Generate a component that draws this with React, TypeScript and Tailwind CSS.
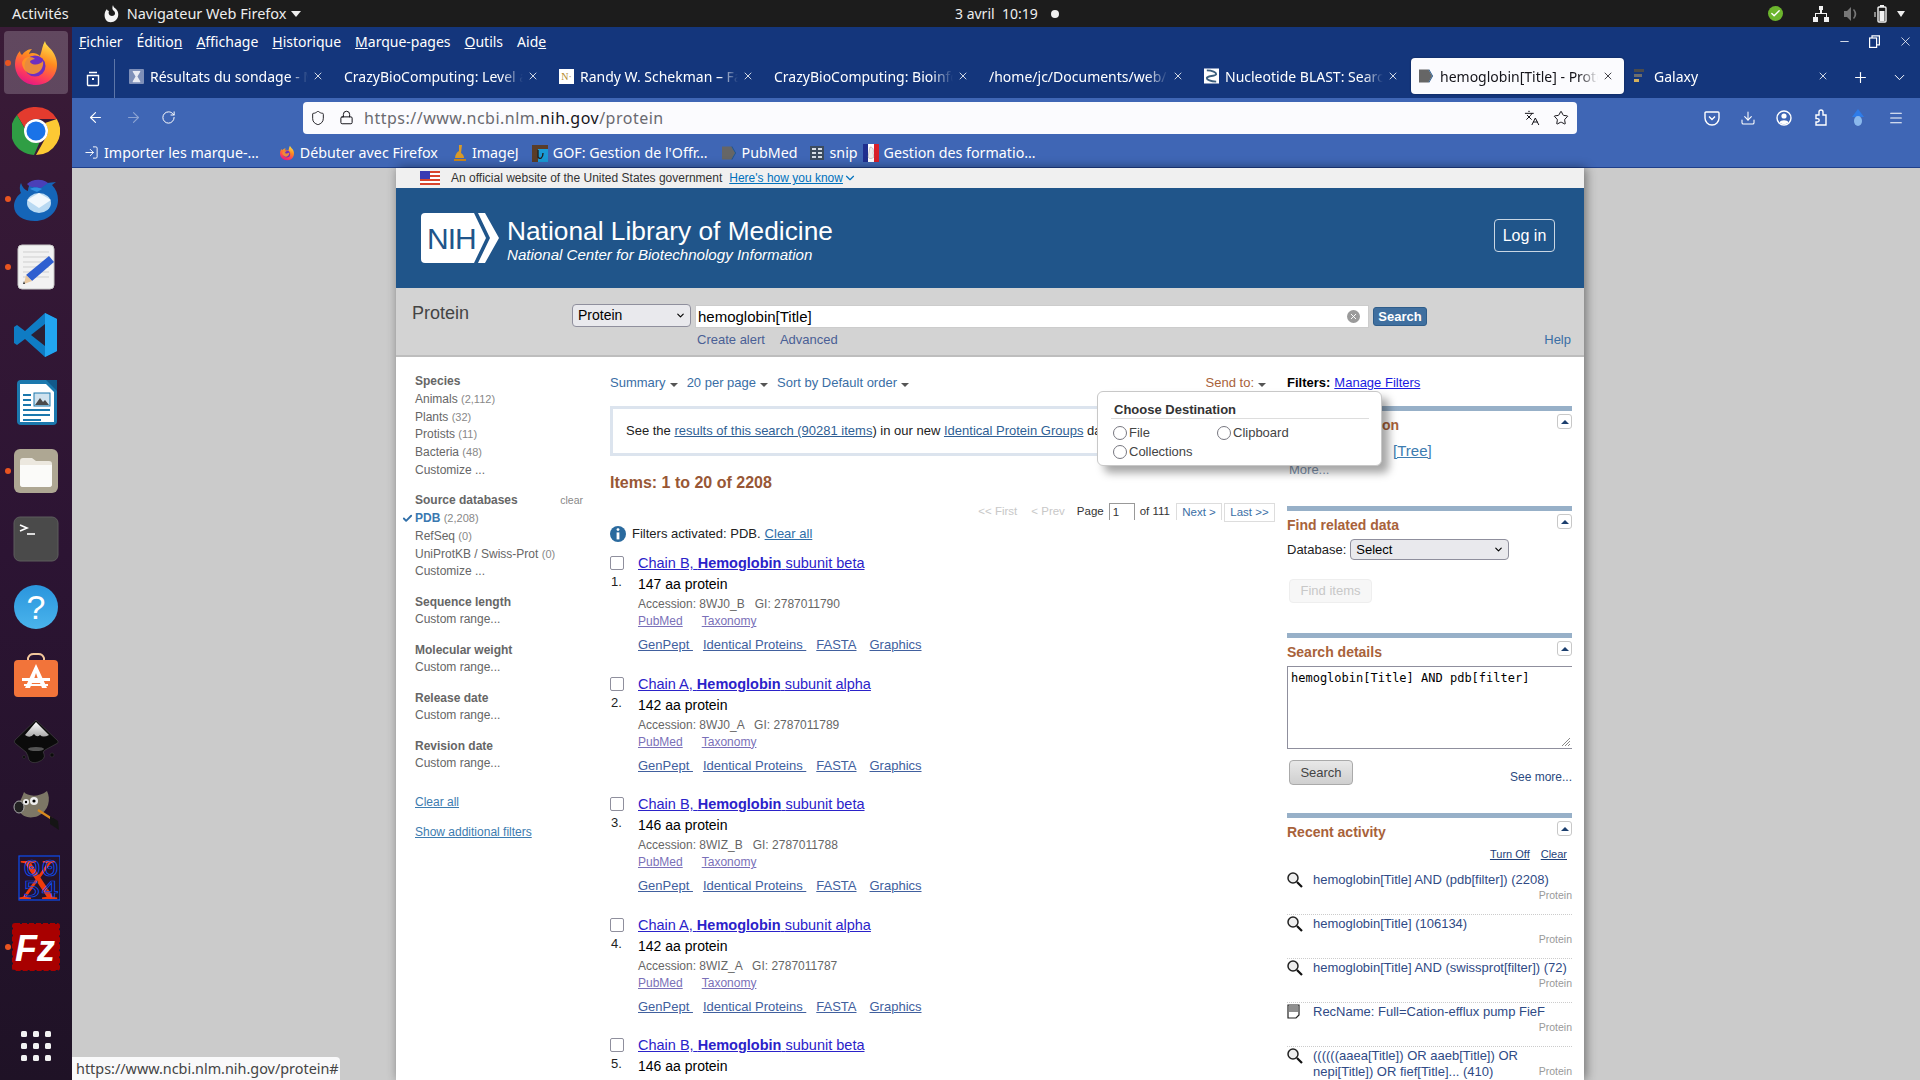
import { ReactNode } from 'react';
import { ArrowLeft, ArrowRight, ChevronDown, Download, Lock, Menu, Plus, RotateCw, Shield, Star, X, Languages, Minus, Check, LogIn } from 'lucide-react';

const Caret = ({ className = 'border-t-[#555]' }: { className?: string }) => (
  <span className={`inline-block w-0 h-0 border-x-[4px] border-x-transparent border-t-[4px] ${className}`} />
);

const FirefoxIcon = ({ size = 48 }: { size?: number }) => (
  <svg width={size} height={size} viewBox="0 0 48 48">
    <defs>
      <linearGradient id="ffa" x1="0.7" y1="0" x2="0.3" y2="1">
        <stop offset="0" stopColor="#ffe14d" />
        <stop offset="0.4" stopColor="#ff8a1f" />
        <stop offset="0.75" stopColor="#ff3d5a" />
        <stop offset="1" stopColor="#e31587" />
      </linearGradient>
    </defs>
    <path d="M33 2c1 5 5 6 8 11 4 6 5 13 3 19-3 9-11 14-20 14C12 46 3 37 3 25c0-5 2-10 5-13 0 2 1 3 2 4 2-3 6-6 10-6-2 2-3 4-3 5 3-2 8-1 11 2 2-5 2-10 5-15z" fill="url(#ffa)" />
    <circle cx="23" cy="27" r="10.5" fill="#6e2fc0" />
    <path d="M12 20c4-3 9-2 11 0-3 1-5 1-5 3 3 4 10 3 13-1 1 5-2 12-9 13-6 1-12-5-12-11 0-1 1-3 2-4z" fill="#ff9a24" opacity="0.85" />
  </svg>
);

const ChromeIcon = () => (
  <svg width="48" height="48" viewBox="0 0 48 48">
    <path d="M24 0a24 24 0 0 1 20.8 12H24a12 12 0 0 0-11.5 8.4L5 8A24 24 0 0 1 24 0z" fill="#e33b2e" />
    <path d="M44.8 12A24 24 0 0 1 24 48l9.5-17A12 12 0 0 0 33 16z" fill="#fcc934" />
    <path d="M5 8l8.7 15a12 12 0 0 0 13.8 12.5L22 48A24 24 0 0 1 5 8z" fill="#2f9e44" />
    <circle cx="24" cy="24" r="12" fill="#fff" />
    <circle cx="24" cy="24" r="9.5" fill="#1a73e8" />
  </svg>
);

const ThunderbirdIcon = () => (
  <svg width="48" height="48" viewBox="0 0 48 48">
    <path d="M9 8c-2 4-1 8 0 10-4 3-7 8-7 13 0 9 9 15 21 15 13 0 23-9 23-21 0-6-2-11-6-15l4-3-9 1C31 5 26 4 22 6c-4 2-6 6-6 10-3-1-6-4-7-8z" fill="#1565b8" />
    <path d="M15 9c5-5 15-6 21-1l-7 5c-5-1-11 0-14-4z" fill="#4a3fb8" />
    <path d="M18 14c3-2 8-2 12 0l-5 3z" fill="#2f8fe0" />
    <ellipse cx="27" cy="28" rx="12" ry="10" fill="#b9d9f2" />
    <path d="M15 25l12 8 12-8-12-7z" fill="#f2f8fd" />
  </svg>
);

const EditorIcon = () => (
  <svg width="48" height="48" viewBox="0 0 48 48">
    <rect x="6" y="2" width="36" height="44" rx="4" fill="#f2f2f2" stroke="#c8c8c8" />
    <path d="M11 9h26M11 14h26M11 19h26M11 24h26M11 29h26M11 34h26" stroke="#cfcfcf" strokeWidth="1" />
    <path d="M37 13l5 6-22 19-6-6z" fill="#2f5fd0" />
    <path d="M14 32l6 6-8 3z" fill="#e8c8a0" />
    <path d="M12 38l1 3-2 0z" fill="#333" />
  </svg>
);

const VsCodeIcon = () => (
  <svg width="48" height="48" viewBox="0 0 48 48">
    <path d="M33 2l12 6v32l-12 6-20-18-8 6-3-2V16l3-2 8 6z" fill="#0f7cc4" />
    <path d="M33 2l12 6v32l-12 6z" fill="#22a5f1" />
    <path d="M33 13v22L19 24z" fill="#2c2034" />
  </svg>
);

const WriterIcon = () => (
  <svg width="48" height="48" viewBox="0 0 48 48">
    <path d="M9 1h26l10 10v31a4 4 0 0 1-4 4H9a4 4 0 0 1-4-4V5a4 4 0 0 1 4-4z" fill="#1b78ad" />
    <path d="M8 5h26l8 8v30H8z" fill="#fff" />
    <path d="M34 1l11 0v11z" fill="#12598a" />
    <path d="M11 15h8v2h-8zM11 20h8v2h-8zM11 25h8v2h-8zM11 30h27v2H11zM11 35h27v2H11zM11 40h18v2H11z" fill="#1b78ad" />
    <rect x="22" y="14" width="16" height="13" fill="#cfe2ee" stroke="#1b78ad" />
    <path d="M23 26l5-7 3 4 2-2 4 5z" fill="#4a4a4a" />
  </svg>
);

const FilesIcon = () => (
  <svg width="48" height="48" viewBox="0 0 48 48">
    <rect x="2" y="2" width="44" height="44" rx="6" fill="#aea793" />
    <path d="M8 14a3 3 0 0 1 3-3h9l4 3h13a3 3 0 0 1 3 3v20a3 3 0 0 1-3 3H11a3 3 0 0 1-3-3z" fill="#ece8df" />
    <path d="M8 18h32v19a3 3 0 0 1-3 3H11a3 3 0 0 1-3-3z" fill="#fbfbf9" />
  </svg>
);

const TerminalIcon = () => (
  <svg width="48" height="48" viewBox="0 0 48 48">
    <rect x="2" y="2" width="44" height="44" rx="6" fill="#4a4a4a" stroke="#5c5c5c" />
    <path d="M8 10l7 3-7 3" fill="none" stroke="#fff" strokeWidth="1.6" />
    <path d="M15 19h8" stroke="#fff" strokeWidth="1.6" />
  </svg>
);

const HelpIcon = () => (
  <svg width="48" height="48" viewBox="0 0 48 48">
    <defs>
      <linearGradient id="hlp" x1="0" y1="0" x2="0" y2="1">
        <stop offset="0" stopColor="#2a95dd" />
        <stop offset="1" stopColor="#4ab4ec" />
      </linearGradient>
    </defs>
    <circle cx="24" cy="24" r="22" fill="url(#hlp)" />
    <text x="24" y="36" textAnchor="middle" fontFamily="Liberation Sans" fontSize="34" fill="#fff">?</text>
  </svg>
);

const StoreIcon = () => (
  <svg width="48" height="48" viewBox="0 0 48 48">
    <path d="M16 10V7a6 6 0 0 1 6-4h4a6 6 0 0 1 6 4v3" fill="none" stroke="#f3c79b" strokeWidth="2" />
    <rect x="2" y="9" width="44" height="37" rx="4" fill="#f2743a" />
    <path d="M24 13l-11 24h5l2-5h8l2 5h5zM22 28l2-6 2 6z" fill="#fff" />
    <path d="M10 27h28v3H10zM12 33h24v2H12z" fill="#fff" />
  </svg>
);

const InkscapeIcon = () => (
  <svg width="48" height="48" viewBox="0 0 48 48">
    <defs>
      <linearGradient id="ink" x1="0" y1="0" x2="0" y2="1">
        <stop offset="0" stopColor="#ffffff" />
        <stop offset="1" stopColor="#a8a8a8" />
      </linearGradient>
    </defs>
    <path d="M24 1L46 22q1 2-2 3L33 31q-3 2-1 4 2 5-6 8-6 2-9-2-1-5-3-8L4 25q-3-2-1-4z" fill="#0b0b0b" stroke="#4a4a4a" strokeWidth="0.6" />
    <path d="M24 3L37 16q-6 3-9 0-3 3-6-1-4 5-9 1z" fill="url(#ink)" />
    <ellipse cx="24" cy="30" rx="8" ry="2" fill="#555" />
    <circle cx="40" cy="36" r="2" fill="#0b0b0b" stroke="#444" strokeWidth="0.4" />
    <circle cx="12" cy="38" r="1.5" fill="#0b0b0b" stroke="#444" strokeWidth="0.4" />
  </svg>
);

const GimpIcon = () => (
  <svg width="48" height="48" viewBox="0 0 48 48">
    <path d="M12 5c3 4 14 6 23-1 4 8 2 20-9 25-8 3-15 1-18-4-2-2-3-5-3-6 2-3 5-8 7-14z" fill="#7d7766" />
    <ellipse cx="7" cy="20" rx="5" ry="6" fill="#222" stroke="#aaa" />
    <circle cx="14" cy="15" r="3" fill="#eee" />
    <circle cx="22" cy="14" r="4" fill="#eee" />
    <circle cx="14" cy="15" r="1.2" fill="#000" />
    <circle cx="22" cy="14" r="1.6" fill="#000" />
    <path d="M26 23l14 9" stroke="#d98a1f" strokeWidth="2.4" />
    <path d="M38 29l8 5 1 9-9-6z" fill="#151515" />
  </svg>
);

const XrayIcon = () => (
  <svg width="48" height="48" viewBox="0 0 48 48">
    <text x="26" y="44" textAnchor="middle" fontFamily="Liberation Serif" fontSize="56" fill="#f03a0a">X</text>
    <rect x="7" y="1" width="41" height="44" fill="none" stroke="#0c4cf0" strokeWidth="1.2" />
    <text x="11" y="21" fontFamily="DejaVu Sans Mono" fontSize="22" textLength="36" lengthAdjust="spacingAndGlyphs" fill="none" stroke="#0c4cf0" strokeWidth="0.7">00</text>
    <text x="11" y="42" fontFamily="DejaVu Sans Mono" fontSize="22" textLength="36" lengthAdjust="spacingAndGlyphs" fill="none" stroke="#0c4cf0" strokeWidth="0.7">54</text>
  </svg>
);

const FileZillaIcon = () => (
  <svg width="48" height="48" viewBox="0 0 48 48">
    <rect x="1" y="1" width="46" height="46" rx="2" fill="#a80000" stroke="#a80000" strokeWidth="2" strokeDasharray="5 2" />
    <text x="23" y="38" textAnchor="middle" fontFamily="Liberation Sans" fontSize="36" fontWeight="700" fontStyle="italic" fill="#fff">Fz</text>
  </svg>
);

const dockApps = [
  { icon: <FirefoxIcon />, running: true, active: true },
  { icon: <ChromeIcon />, running: false, active: false },
  { icon: <ThunderbirdIcon />, running: true, active: false },
  { icon: <EditorIcon />, running: true, active: false },
  { icon: <VsCodeIcon />, running: false, active: false },
  { icon: <WriterIcon />, running: false, active: false },
  { icon: <FilesIcon />, running: true, active: false },
  { icon: <TerminalIcon />, running: false, active: false },
  { icon: <HelpIcon />, running: false, active: false },
  { icon: <StoreIcon />, running: false, active: false },
  { icon: <InkscapeIcon />, running: false, active: false },
  { icon: <GimpIcon />, running: false, active: false },
  { icon: <XrayIcon />, running: false, active: false },
  { icon: <FileZillaIcon />, running: true, active: false },
];

const Dock = () => (
  <div className="w-[72px] h-full shrink-0 flex flex-col items-center pt-[2px] pb-[19px] bg-gradient-to-b from-[#3a1b37] via-[#2c1433] to-[#1f1226]">
    {dockApps.map((app, i) => (
      <div key={i} className="relative w-[72px] h-[68px] shrink-0 flex items-center justify-center">
        {app.active && <div className="absolute left-[4px] top-[2px] w-[64px] h-[63px] rounded-[4px] bg-white/20" />}
        {app.running && <div className="absolute left-[5px] top-[31px] w-[6px] h-[6px] rounded-full bg-[#e95420]" />}
        <div className="relative">{app.icon}</div>
      </div>
    ))}
    <div className="mt-auto grid grid-cols-3 gap-[6px]">
      {Array.from({ length: 9 }).map((_, i) => (
        <div key={i} className="w-[6px] h-[6px] rounded-[1.5px] bg-[#f2f2f2]" />
      ))}
    </div>
  </div>
);

const TopBar = () => (
  <div className="relative h-[27px] shrink-0 bg-[#1c1c1c] text-[#ededed] text-[14.5px] flex items-center pl-[12px] pr-[15px] font-['Noto_Sans',sans-serif]">
    <span>Activités</span>
    <svg className="ml-[35px]" width="16" height="18" viewBox="0 0 16 18">
      <path d="M9 0c0 2 2 3 3 4 3 3 3 8 0 11s-8 3-10 0C0 12 0 7 3 4c0 1 1 2 2 2-1 2 0 5 3 5s4-3 2-5C8 5 8 2 9 0z" fill="#f4f4f4" />
    </svg>
    <span className="ml-[7px]">Navigateur Web Firefox</span>
    <span className="ml-[5px] w-0 h-0 border-x-[5px] border-x-transparent border-t-[6px] border-t-[#ededed]" />
    <div className="absolute left-[955px] flex items-center text-[14px]">
      <span>3 avril&nbsp; 10:19</span>
      <span className="ml-[13px] w-[8px] h-[8px] rounded-full bg-[#f0f0f0]" />
    </div>
    <div className="ml-auto flex items-center">
      <span className="w-[15px] h-[15px] rounded-full bg-[#6cb52d] flex items-center justify-center">
        <Check size={11} strokeWidth={3} className="text-white" />
      </span>
      <svg className="ml-[30px]" width="16" height="16" viewBox="0 0 16 16" fill="#f2f2f2">
        <path d="M6 0h4v4H9v3h5v4h2v5h-5v-5h2V8H3v3h2v5H0v-5h2V7h5V4H6z" />
      </svg>
      <svg className="ml-[14px]" width="16" height="16" viewBox="0 0 16 16" fill="#777">
        <path d="M1 5h3l4-4v14l-4-4H1z" />
        <path d="M10 4l1-1c3 3 3 7 0 10l-1-1c2-2 2-6 0-8z" />
      </svg>
      <svg className="ml-[13px]" width="16" height="18" viewBox="0 0 16 18">
        <path d="M2 7h2v5H2z" fill="#888" />
        <rect x="6" y="2" width="8" height="15" rx="1" fill="none" stroke="#f2f2f2" strokeWidth="1.4" />
        <rect x="8" y="0" width="4" height="2" fill="#f2f2f2" />
        <rect x="7.5" y="6" width="5" height="10" fill="#f2f2f2" />
      </svg>
      <span className="ml-[9px] w-0 h-0 border-x-[4px] border-x-transparent border-t-[6px] border-t-[#ededed]" />
    </div>
  </div>
);

const Favicon = ({ kind }: { kind: string }) => {
  if (kind === 'hourglass') {
    return (
      <svg width="15" height="15" viewBox="0 0 16 16">
        <rect width="16" height="16" rx="1" fill="#7e8fb8" />
        <path d="M4 2h8v1L9 8l3 5v1H4v-1l3-5-3-5z" fill="#e8eaf2" />
      </svg>
    );
  }
  if (kind === 'randy') {
    return (
      <span className="w-[15px] h-[15px] bg-white text-[#b48a2b] text-[10px] leading-[15px] font-['Liberation_Serif',serif] text-center">N·</span>
    );
  }
  if (kind === 'blast') {
    return (
      <svg width="15" height="16" viewBox="0 0 16 16">
        <rect width="16" height="16" fill="#fff" />
        <path d="M3 2c6 0 10 2 10 4S3 8 3 10s4 4 10 4" fill="none" stroke="#3c5f7e" strokeWidth="2" />
      </svg>
    );
  }
  if (kind === 'pubmed') {
    return (
      <svg width="15" height="16" viewBox="0 0 16 16">
        <path d="M0 1h10l4 7-4 7H0z" fill="#666" />
        <path d="M11 1l4 7-4 7h-1l4-7-4-7z" fill="#20558a" />
      </svg>
    );
  }
  return (
    <svg width="14" height="14" viewBox="0 0 14 14">
      <path d="M0 0h10v3H0z" fill="#4b4b4b" />
      <path d="M0 5h8v3H0z" fill="#6d6d6d" />
      <path d="M0 10h5v3H0z" fill="#d5b05c" />
    </svg>
  );
};

const tabs = [
  { title: 'Résultats du sondage - Mentimeter', icon: 'hourglass' },
  { title: 'CrazyBioComputing: Level and more', icon: '' },
  { title: 'Randy W. Schekman – Facts', icon: 'randy' },
  { title: 'CrazyBioComputing: Bioinformatics', icon: '' },
  { title: '/home/jc/Documents/web/index', icon: '' },
  { title: 'Nucleotide BLAST: Search nucleotide', icon: 'blast' },
  { title: 'hemoglobin[Title] - Protein', icon: 'pubmed', active: true },
  { title: 'Galaxy', icon: 'galaxy' },
];

const TabBar = () => (
  <div className="h-[39px] flex items-start">
    <div className="w-[43px] h-[39px] border-r border-r-[#5d76a8] flex items-center justify-center">
      <svg width="16" height="16" viewBox="0 0 16 16" fill="none" stroke="#fff" strokeWidth="1.4">
        <path d="M4 1.5h8M2.5 4.5h11v9a1 1 0 0 1-1 1h-9a1 1 0 0 1-1-1z" />
        <path d="M7 8h2" strokeWidth="2" />
      </svg>
    </div>
    <div className="ml-[6px] flex">
      {tabs.map((tab) => (
        <div
          key={tab.title}
          className={`w-[213px] mr-[2px] h-[36px] mt-[-1px] rounded-[4px] pl-[8px] pr-[10px] flex items-center text-[14px] ${
            tab.active ? 'bg-[#fbfbfe] text-[#15141a] shadow-[0_0_2px_rgba(0,0,0,0.4)]' : 'text-white'
          }`}
        >
          {tab.icon && (
            <span className="mr-[6px] shrink-0 flex">
              <Favicon kind={tab.icon} />
            </span>
          )}
          <span className="flex-1 overflow-hidden whitespace-nowrap [mask-image:linear-gradient(to_right,black_88%,transparent)]">{tab.title}</span>
          <X size={12} strokeWidth={1.6} className="ml-[4px] shrink-0" />
        </div>
      ))}
    </div>
    <div className="h-[36px] flex items-center text-white">
      <Plus size={17} strokeWidth={1.6} className="ml-[11px]" />
      <ChevronDown size={17} strokeWidth={1.4} className="ml-[22px]" />
    </div>
  </div>
);

const BookmarkIcon = ({ kind }: { kind: string }) => {
  if (kind === 'ff') return <FirefoxIcon size={16} />;
  if (kind === 'imagej') {
    return (
      <svg width="14" height="18" viewBox="0 0 14 18">
        <path d="M6 1h3l-1 8c2 1 3 3 3 5H2c0-3 2-6 4-7z" fill="#d89a28" />
        <path d="M1 15h12v2H1z" fill="#c9851a" />
      </svg>
    );
  }
  if (kind === 'gof') {
    return (
      <svg width="16" height="17" viewBox="0 0 16 17">
        <rect width="16" height="17" fill="#5a3d28" />
        <rect x="6" y="4" width="10" height="13" fill="#1a9ad6" />
        <path d="M6 5v7c2 3 5 1 5-4" fill="none" stroke="#222" strokeWidth="1.4" />
      </svg>
    );
  }
  if (kind === 'pubmed') return <Favicon kind="pubmed" />;
  if (kind === 'snip') {
    return (
      <svg width="16" height="16" viewBox="0 0 16 16">
        <rect x="1" y="1" width="14" height="14" fill="#3c4b5e" />
        <path d="M3 3h4v2H3zM3 7h4v2H3zM3 11h4v2H3zM9 3h4v2H9zM9 7h4v2H9zM9 11h4v2H9z" fill="#d5dce5" />
      </svg>
    );
  }
  return (
    <svg width="16" height="18" viewBox="0 0 16 18">
      <rect width="16" height="18" fill="#fff" />
      <rect width="5" height="18" fill="#1f2f8f" />
      <rect x="11" width="5" height="18" fill="#d8202a" />
      <path d="M7 3c3 0 4 3 3 6l1 4c-2 2-5 2-6 0l1-5z" fill="#eee" stroke="#888" strokeWidth="0.4" />
    </svg>
  );
};

const bookmarks = [
  { label: 'Débuter avec Firefox', kind: 'ff', gap: 'ml-[20px]' },
  { label: 'ImageJ', kind: 'imagej', gap: 'ml-[15px]' },
  { label: "GOF: Gestion de l'Offr…", kind: 'gof', gap: 'ml-[13px]' },
  { label: 'PubMed', kind: 'pubmed', gap: 'ml-[14px]' },
  { label: 'snip', kind: 'snip', gap: 'ml-[11px]' },
  { label: 'Gestion des formatio…', kind: 'fr', gap: 'ml-[5px]' },
];

const BrowserChrome = () => (
  <div className="shrink-0 font-['Noto_Sans',sans-serif]">
    <div className="bg-[#14367c]">
      <div className="relative h-[32px] pb-[4px] flex items-center pl-[7px] text-white text-[14px] gap-[14px]">
        <span><span className="underline">F</span>ichier</span>
        <span>Éditio<span className="underline">n</span></span>
        <span><span className="underline">A</span>ffichage</span>
        <span><span className="underline">H</span>istorique</span>
        <span><span className="underline">M</span>arque-pages</span>
        <span><span className="underline">O</span>utils</span>
        <span>Aid<span className="underline">e</span></span>
        <div className="ml-auto mr-[7px] flex items-center gap-[18px]">
          <Minus size={13} strokeWidth={1.5} />
          <svg width="11" height="13" viewBox="0 0 11 13" fill="none" stroke="#fff" strokeWidth="1.2">
            <rect x="0.6" y="3" width="7" height="9.4" />
            <path d="M3 3V0.8h7.4v9H7.6" />
          </svg>
          <X size={15} strokeWidth={1.2} />
        </div>
      </div>
      <TabBar />
    </div>
    <div className="bg-[#3f66b5] border-b border-b-[#1f3f8a]">
      <div className="h-[39px] flex items-center text-white">
        <ArrowLeft size={17} strokeWidth={1.6} className="ml-[15px]" />
        <ArrowRight size={17} strokeWidth={1.6} className="ml-[21px] opacity-40" />
        <RotateCw size={15} strokeWidth={1.6} className="ml-[19px]" />
        <div className="ml-[127px] w-[1274px] h-[32px] bg-[#fbfbfe] rounded-[4px] flex items-center text-[#15141a]">
          <Shield size={16} strokeWidth={1.4} className="ml-[7px]" />
          <Lock size={15} strokeWidth={1.6} className="ml-[13px]" />
          <span className="ml-[10px] mt-px text-[16px] tracking-[0.5px] text-[#6a6a70] whitespace-nowrap">https://www.ncbi.nlm.<span className="text-[#15141a]">nih.gov</span>/protein</span>
          <Languages size={16} strokeWidth={1.5} className="ml-auto" />
          <Star size={16} strokeWidth={1.5} className="ml-[13px] mr-[8px]" />
        </div>
        <svg className="ml-[127px]" width="16" height="16" viewBox="0 0 16 16" fill="none" stroke="#fff" strokeWidth="1.4">
          <path d="M2 2h12a1 1 0 0 1 1 1v5a7 7 0 0 1-14 0V3a1 1 0 0 1 1-1z" />
          <path d="M5 6.5l3 3 3-3" />
        </svg>
        <Download size={16} strokeWidth={1.6} className="ml-[20px]" />
        <svg className="ml-[20px]" width="16" height="16" viewBox="0 0 16 16">
          <circle cx="8" cy="8" r="7" fill="none" stroke="#fff" strokeWidth="1.4" />
          <circle cx="8" cy="6" r="2.6" fill="#fff" />
          <path d="M3.5 12.5c1-3 8-3 9 0-2 2-7 2-9 0z" fill="#fff" />
        </svg>
        <svg className="ml-[21px]" width="16" height="17" viewBox="0 0 16 17" fill="none" stroke="#fff" strokeWidth="1.4">
          <path d="M3 6h3V3a2 2 0 0 1 4 0v3h3v10H3v-3h1.5a1.5 1.5 0 0 0 0-3.4H3z" />
        </svg>
        <svg className="ml-[21px]" width="16" height="18" viewBox="0 0 16 18">
          <path d="M8 0l6 8H2z" fill="#2e7be8" />
          <ellipse cx="8" cy="12" rx="4" ry="5" fill="#8ab8ec" />
        </svg>
        <Menu size={16} strokeWidth={1.6} className="ml-[22px]" />
      </div>
      <div className="h-[30px] flex items-start pt-[4px] text-white text-[14.25px]">
        <LogIn size={15} strokeWidth={1.5} className="ml-[12px] mt-[4px]" />
        <span className="ml-[5px] mt-px">Importer les marque-…</span>
        {bookmarks.map((b) => (
          <div key={b.label} className={`${b.gap} flex items-center gap-[5px] h-[24px]`}>
            <BookmarkIcon kind={b.kind} />
            <span>{b.label}</span>
          </div>
        ))}
      </div>
    </div>
  </div>
);

const NihLogo = () => (
  <svg width="78" height="50" viewBox="0 0 78 50">
    <path d="M4 0h49l12 25-12 25H4a4 4 0 0 1-4-4V4a4 4 0 0 1 4-4z" fill="#fff" />
    <path d="M57 0h7l14 25-14 25h-7l12-25z" fill="#fff" />
    <text x="6" y="36" fontFamily="Liberation Sans" fontSize="30" fill="#20558a" letterSpacing="-1">NIH</text>
  </svg>
);

const GovBanner = () => (
  <div className="h-[20px] bg-[#f0f0f0] flex items-center pl-[24px] text-[12px] text-[#333]">
    <svg width="20" height="14" viewBox="0 0 20 14">
      <rect width="20" height="14" fill="#fff" />
      <path d="M0 1h20M0 5h20M0 9h20M0 13h20" stroke="#d8442c" strokeWidth="2" />
      <rect width="10" height="8" fill="#3b3bb3" />
    </svg>
    <span className="ml-[11px]">An official website of the United States government</span>
    <span className="ml-[7px] text-[#0071bc] underline">Here's how you know</span>
    <ChevronDown size={14} className="text-[#0071bc]" />
  </div>
);

const PageHeader = () => (
  <div className="h-[100px] bg-[#20558a] flex items-center pl-[25px] pr-[29px] text-white">
    <NihLogo />
    <div className="ml-[8px] mt-[3px]">
      <div className="text-[26.3px] leading-[30px]">National Library of Medicine</div>
      <div className="text-[15.1px] leading-[18px] italic">National Center for Biotechnology Information</div>
    </div>
    <div className="ml-auto w-[61px] h-[33px] mt-[-5px] border border-[#c9d6e3] rounded-[4px] flex items-center justify-center text-[16px]">Log in</div>
  </div>
);

const FakeSelect = ({ label, className }: { label: string; className: string }) => (
  <div className={`flex items-center justify-between bg-[#e9e9ed] border border-[#8f8f9d] rounded-[4px] pl-[5px] pr-[4px] text-black ${className}`}>
    <span>{label}</span>
    <ChevronDown size={11} strokeWidth={2.5} />
  </div>
);

const SearchBar = () => (
  <div className="h-[69px] bg-[#d3d3d3] border-b-2 border-b-[#bdbdbd] pl-[16px] pr-[13px] pt-[15px] flex">
    <div className="w-[160px] text-[18px] leading-[20px] text-[#444]">Protein</div>
    <div className="flex-1">
      <div className="flex items-start">
        <FakeSelect label="Protein" className="w-[119px] h-[23px] mt-px text-[14px]" />
        <div className="relative ml-[4px] w-[674px] h-[23px] mt-[2px]">
          <input readOnly value="hemoglobin[Title]" className="w-full h-full bg-white border border-[#ccc] pl-[2px] text-[15px] text-black outline-none" />
          <span className="absolute right-[9px] top-[5px] w-[13px] h-[13px] rounded-full bg-[#9a9a9a] flex items-center justify-center">
            <X size={9} strokeWidth={2.5} className="text-white" />
          </span>
        </div>
        <div className="ml-[4px] w-[54px] h-[19px] mt-[4px] rounded-[3px] bg-[#3f6f9f] border border-[#2f5d8a] text-white text-[13px] font-bold flex items-center justify-center">Search</div>
      </div>
      <div className="mt-[3px] h-[18px] pl-[125px] flex items-center text-[13px] text-[#4a5f95]">
        <span>Create alert</span>
        <span className="ml-[15px]">Advanced</span>
        <span className="ml-auto text-[#3a6ea5]">Help</span>
      </div>
    </div>
  </div>
);

const Facet = ({ title, items, clear }: { title: string; items: ReactNode[]; clear?: boolean }) => (
  <div className="mb-[12.4px] text-[12px] leading-[17.8px] text-[#666]">
    <div className="flex items-center justify-between pr-[27px]">
      <span className="font-bold">{title}</span>
      {clear && <span className="text-[10.5px] text-[#888]">clear</span>}
    </div>
    {items.map((item, i) => (
      <div key={i}>{item}</div>
    ))}
  </div>
);

const Count = ({ n }: { n: string }) => <span className="text-[#888] text-[11px]"> ({n})</span>;

const Sidebar = () => (
  <div className="w-[214px] shrink-0 pl-[19px] pt-[16px]">
    <Facet
      title="Species"
      items={[
        <>Animals <Count n="2,112" /></>,
        <>Plants <Count n="32" /></>,
        <>Protists <Count n="11" /></>,
        <>Bacteria <Count n="48" /></>,
        'Customize ...',
      ]}
    />
    <Facet
      title="Source databases"
      clear
      items={[
        <span className="relative">
          <Check size={11} strokeWidth={4} className="absolute -left-[13px] top-[2px] text-[#2f6ea8]" />
          <b className="text-[#3a78b0]">PDB</b> <Count n="2,208" />
        </span>,
        <>RefSeq <Count n="0" /></>,
        <>UniProtKB / Swiss-Prot <Count n="0" /></>,
        'Customize ...',
      ]}
    />
    <Facet title="Sequence length" items={['Custom range...']} />
    <Facet title="Molecular weight" items={['Custom range...']} />
    <Facet title="Release date" items={['Custom range...']} />
    <Facet title="Revision date" items={['Custom range...']} />
    <div className="mt-[20px] text-[12px] leading-[18px] text-[#3d7cb0] underline">Clear all</div>
    <div className="mt-[12px] text-[12px] leading-[18px] text-[#3d7cb0] underline">Show additional filters</div>
  </div>
);

const results = [
  { chain: 'Chain B,', tail: 'subunit beta', aa: '147', acc: '8WJ0_B', gi: '2787011790' },
  { chain: 'Chain A,', tail: 'subunit alpha', aa: '142', acc: '8WJ0_A', gi: '2787011789' },
  { chain: 'Chain B,', tail: 'subunit beta', aa: '146', acc: '8WIZ_B', gi: '2787011788' },
  { chain: 'Chain A,', tail: 'subunit alpha', aa: '142', acc: '8WIZ_A', gi: '2787011787' },
  { chain: 'Chain B,', tail: 'subunit beta', aa: '146', acc: '8WIZ_B', gi: '2787011786' },
];

const ResultItem = ({ index, item }: { index: number; item: (typeof results)[number] }) => (
  <div className="flex mb-[20.5px]">
    <div className="w-[28px] shrink-0 pt-[2px]">
      <input type="checkbox" className="appearance-none block w-[14px] h-[14px] border border-[#8f8f9d] rounded-[2px] bg-white" />
      <div className="mt-[3px] pl-px text-[13px] leading-[18px] text-[#222]">{index}.</div>
    </div>
    <div>
      <div className="h-[18px] leading-[18px] text-[14.5px] text-[#2b22c9] underline whitespace-pre">
        {item.chain} <b>Hemoglobin</b> {item.tail}
      </div>
      <div className="mt-[3px] h-[18px] leading-[18px] text-[14px] text-black">{item.aa} aa protein</div>
      <div className="mt-[2px] h-[18px] leading-[18px] text-[12px] text-[#666] whitespace-pre">Accession: {item.acc}   GI: {item.gi}</div>
      <div className="-mt-px h-[18px] leading-[18px] text-[12px] text-[#7a70b8] flex gap-[19px]">
        <span className="underline">PubMed</span>
        <span className="underline">Taxonomy</span>
      </div>
      <div className="mt-[6px] h-[18px] leading-[18px] text-[13px] text-[#41609e] flex gap-[10px] whitespace-pre">
        <span className="underline">GenPept </span>
        <span className="underline">Identical Proteins </span>
        <span className="underline">FASTA</span>
        <span className="underline ml-[3px]">Graphics</span>
      </div>
    </div>
  </div>
);

const Radio = () => (
  <input type="radio" className="appearance-none block ml-[2px] w-[14px] h-[14px] rounded-full border border-[#77777f] bg-white" />
);

const SendToPopup = () => (
  <div className="absolute left-[487px] top-[34px] z-10 w-[285px] h-[75px] bg-white border border-[#c8c8c8] rounded-[6px] shadow-[7px_7px_8px_rgba(0,0,0,0.35)] pl-[13px] pr-[12px] pt-[8px] text-[13px] leading-[19px] text-[#444]">
    <div className="border-b border-b-[#ddd] h-[19px] pl-[3px] font-bold text-[#333]">Choose Destination</div>
    <div className="mt-[4px] flex items-center">
      <Radio />
      <span className="ml-[2px] w-[86px]">File</span>
      <Radio />
      <span className="ml-[2px]">Clipboard</span>
    </div>
    <div className="flex items-center">
      <Radio />
      <span className="ml-[2px]">Collections</span>
    </div>
  </div>
);

const Pager = () => (
  <div className="mt-[10px] h-[19px] flex items-start justify-end text-[11.5px] leading-[17px] text-[#333]">
    <span className="text-[#c8c8c8]">&lt;&lt; First</span>
    <span className="ml-[14px] text-[#c8c8c8]">&lt; Prev</span>
    <span className="ml-[12px]">Page</span>
    <div className="ml-[5px] w-[26px] h-[17px] border-x border-t border-[#999] pl-[3px]">1</div>
    <span className="ml-[5px]">of 111</span>
    <div className="ml-[6px] w-[46px] h-[17px] border-x border-t border-[#ddd] text-center text-[#3a6ea5]">Next &gt;</div>
    <div className="ml-[2px] w-[51px] h-[19px] border-x border-y border-[#ddd] text-center text-[#3a6ea5]">Last &gt;&gt;</div>
  </div>
);

const MainColumn = () => (
  <div className="relative w-[665px] shrink-0 pt-[17px]">
    <div className="h-[18px] flex items-center text-[13px] text-[#3a6ea5] pr-[9px]">
      <span>Summary</span>
      <span className="ml-[4px]"><Caret /></span>
      <span className="ml-[9px]">20 per page</span>
      <span className="ml-[4px]"><Caret /></span>
      <span className="ml-[9px]">Sort by Default order</span>
      <span className="ml-[4px]"><Caret /></span>
      <span className="ml-auto text-[#a8623a]">Send to:</span>
      <span className="ml-[4px]"><Caret /></span>
    </div>
    <SendToPopup />
    <div className="mt-[14px] h-[50px] border-[3px] border-[#dce4ee] pl-[13px] flex items-center text-[13px] text-[#222] whitespace-nowrap overflow-hidden">
      <span>See the <span className="text-[#2f5f95] underline">results of this search (90281 items</span>) in our new <span className="text-[#2f5f95] underline">Identical Protein Groups</span> database.</span>
    </div>
    <div className="mt-[17px] h-[20px] leading-[20px] text-[16px] font-bold text-[#985735]">Items: 1 to 20 of 2208</div>
    <Pager />
    <div className="mt-[3px] h-[18px] flex items-center text-[13px] text-[#222]">
      <svg width="16" height="16" viewBox="0 0 16 16">
        <circle cx="8" cy="8" r="8" fill="#2a6a9e" />
        <circle cx="8" cy="3.6" r="1.4" fill="#fff" />
        <path d="M6.6 6.4h2.8v7H6.6z" fill="#fff" />
      </svg>
      <span className="ml-[6px]">Filters activated: PDB.</span>
      <span className="ml-[4px] text-[#2f6ea8] underline">Clear all</span>
    </div>
    <div className="mt-[11px]">
      {results.map((item, i) => (
        <ResultItem key={i} index={i + 1} item={item} />
      ))}
    </div>
  </div>
);

const SectionHead = ({ title }: { title: string }) => (
  <>
    <div className="h-[5px] bg-[#97b0c8]" />
    <div className="mt-[5px] h-[18px] flex items-start justify-between">
      <span className="text-[14px] leading-[18px] font-bold text-[#a8623a]">{title}</span>
      <span className="-mt-[2px] w-[15px] h-[15px] border border-[#c8c8c8] rounded-[3px] flex items-center justify-center bg-white">
        <span className="w-0 h-0 border-x-[4px] border-x-transparent border-b-[4px] border-b-[#1c3f6e]" />
      </span>
    </div>
  </>
);

const MagnifierIcon = () => (
  <svg width="16" height="16" viewBox="0 0 16 16" fill="none">
    <circle cx="6" cy="6" r="5" stroke="#222" strokeWidth="1.5" fill="#eee" />
    <path d="M10 10l5 5" stroke="#111" strokeWidth="2.2" />
  </svg>
);

const RecordIcon = () => (
  <svg width="13" height="15" viewBox="0 0 13 15" fill="none">
    <path d="M1 1h11v10l-3 3H1z" stroke="#222" strokeWidth="1.2" fill="#fff" />
    <path d="M2 3h9M2 5h9M2 7h9" stroke="#222" strokeWidth="1.2" />
  </svg>
);

const activity: { text: ReactNode; icon: ReactNode }[] = [
  { text: 'hemoglobin[Title] AND (pdb[filter]) (2208)', icon: <MagnifierIcon /> },
  { text: 'hemoglobin[Title] (106134)', icon: <MagnifierIcon /> },
  { text: 'hemoglobin[Title] AND (swissprot[filter]) (72)', icon: <MagnifierIcon /> },
  { text: 'RecName: Full=Cation-efflux pump FieF', icon: <RecordIcon /> },
  { text: <>((((((aaea[Title]) OR aaeb[Title]) OR<br />nepi[Title]) OR fief[Title]... (410)</>, icon: <MagnifierIcon /> },
];

const RightColumn = () => (
  <div className="w-[285px] ml-[12px] shrink-0 pt-[17px]">
    <div className="h-[18px] flex items-center text-[13px]">
      <b className="text-black">Filters:</b>
      <span className="ml-[4px] text-[#1a1ae0] underline">Manage Filters</span>
    </div>
    <div className="mt-[14px] h-[100px]">
      <SectionHead title="Results by taxon" />
      <div className="mt-[8px] h-[18px] leading-[18px] text-[14px] text-[#444]">
        Top Organisms <span className="ml-[8px] text-[15px] text-[#3d7cb0] underline">[Tree]</span>
      </div>
      <div className="mt-px h-[18px] pl-[2px] leading-[18px] text-[13px] text-[#7f93ad]">More...</div>
    </div>
    <div className="h-[127px]">
      <SectionHead title="Find related data" />
      <div className="mt-[5px] flex items-center text-[13px] text-[#222]">
        <span>Database:</span>
        <FakeSelect label="Select" className="ml-[4px] w-[159px] h-[21px] text-[13px]" />
      </div>
      <div className="mt-[19px] ml-[2px] w-[83px] h-[24px] rounded-[4px] border border-[#eee] bg-[#f7f7f7] text-[13px] text-[#c8c8c8] flex items-center justify-center">Find items</div>
    </div>
    <div className="h-[180px]">
      <SectionHead title="Search details" />
      <div className="relative mt-[5px] h-[83px] border border-[#8f8f9d] border-r-0 pl-[3px] pt-[3px] font-['DejaVu_Sans_Mono',monospace] text-[12px] leading-[16px] text-black">
        hemoglobin[Title] AND pdb[filter]
        <svg className="absolute right-[1px] bottom-[1px]" width="10" height="10" viewBox="0 0 10 10" stroke="#888">
          <path d="M1 9l8-8M4 9l5-5M7 9l2-2" />
        </svg>
      </div>
      <div className="mt-[11px] flex items-start justify-between">
        <div className="ml-[2px] w-[64px] h-[25px] rounded-[4px] border border-[#aaa] bg-gradient-to-b from-[#e8e8e8] to-[#cfcfcf] text-[13px] text-[#444] flex items-center justify-center">Search</div>
        <span className="mt-[8px] text-[12px] text-[#2c4a80]">See more...</span>
      </div>
    </div>
    <SectionHead title="Recent activity" />
    <div className="mt-[4px] h-[18px] flex items-center justify-end gap-[11px] pr-[5px] text-[11px] text-[#1f3f7a]">
      <span className="underline">Turn Off</span>
      <span className="underline">Clear</span>
    </div>
    <div className="mt-[8px]">
      {activity.map((row, i) => (
        <div key={i} className="relative h-[44px] border-b border-dotted border-b-[#ccc] flex">
          <div className="w-[26px] shrink-0 pt-[1px]">{row.icon}</div>
          <div className="text-[13px] leading-[16px] text-[#2f4a85] pt-px whitespace-nowrap">{row.text}</div>
          <span className="absolute right-0 top-[17px] text-[10.5px] leading-[14px] text-[#999]">Protein</span>
        </div>
      ))}
    </div>
  </div>
);

const NcbiPage = () => (
  <div className="ml-[324px] w-[1188px] h-[912px] bg-white shadow-[2px_0_10px_rgba(0,0,0,0.45)] font-['Liberation_Sans',sans-serif] overflow-hidden">
    <GovBanner />
    <PageHeader />
    <SearchBar />
    <div className="flex">
      <Sidebar />
      <MainColumn />
      <RightColumn />
    </div>
  </div>
);

export default function App() {
  return (
    <div className="relative w-[1920px] h-[1080px] overflow-hidden flex flex-col bg-[#cbcbcb]">
      <TopBar />
      <div className="flex-1 flex min-h-0">
        <Dock />
        <div className="flex-1 min-w-0 flex flex-col">
          <BrowserChrome />
          <div className="flex-1 min-h-0 bg-[#cbcbcb]">
            <NcbiPage />
          </div>
        </div>
      </div>
      <div className="absolute left-[72px] bottom-0 w-[268px] h-[23px] rounded-tr-[4px] bg-[#f9f9fa] pl-[4px] text-[14.4px] leading-[23px] text-[#444] font-['Noto_Sans',sans-serif] whitespace-nowrap overflow-hidden">
        https://www.ncbi.nlm.nih.gov/protein#
      </div>
    </div>
  );
}
